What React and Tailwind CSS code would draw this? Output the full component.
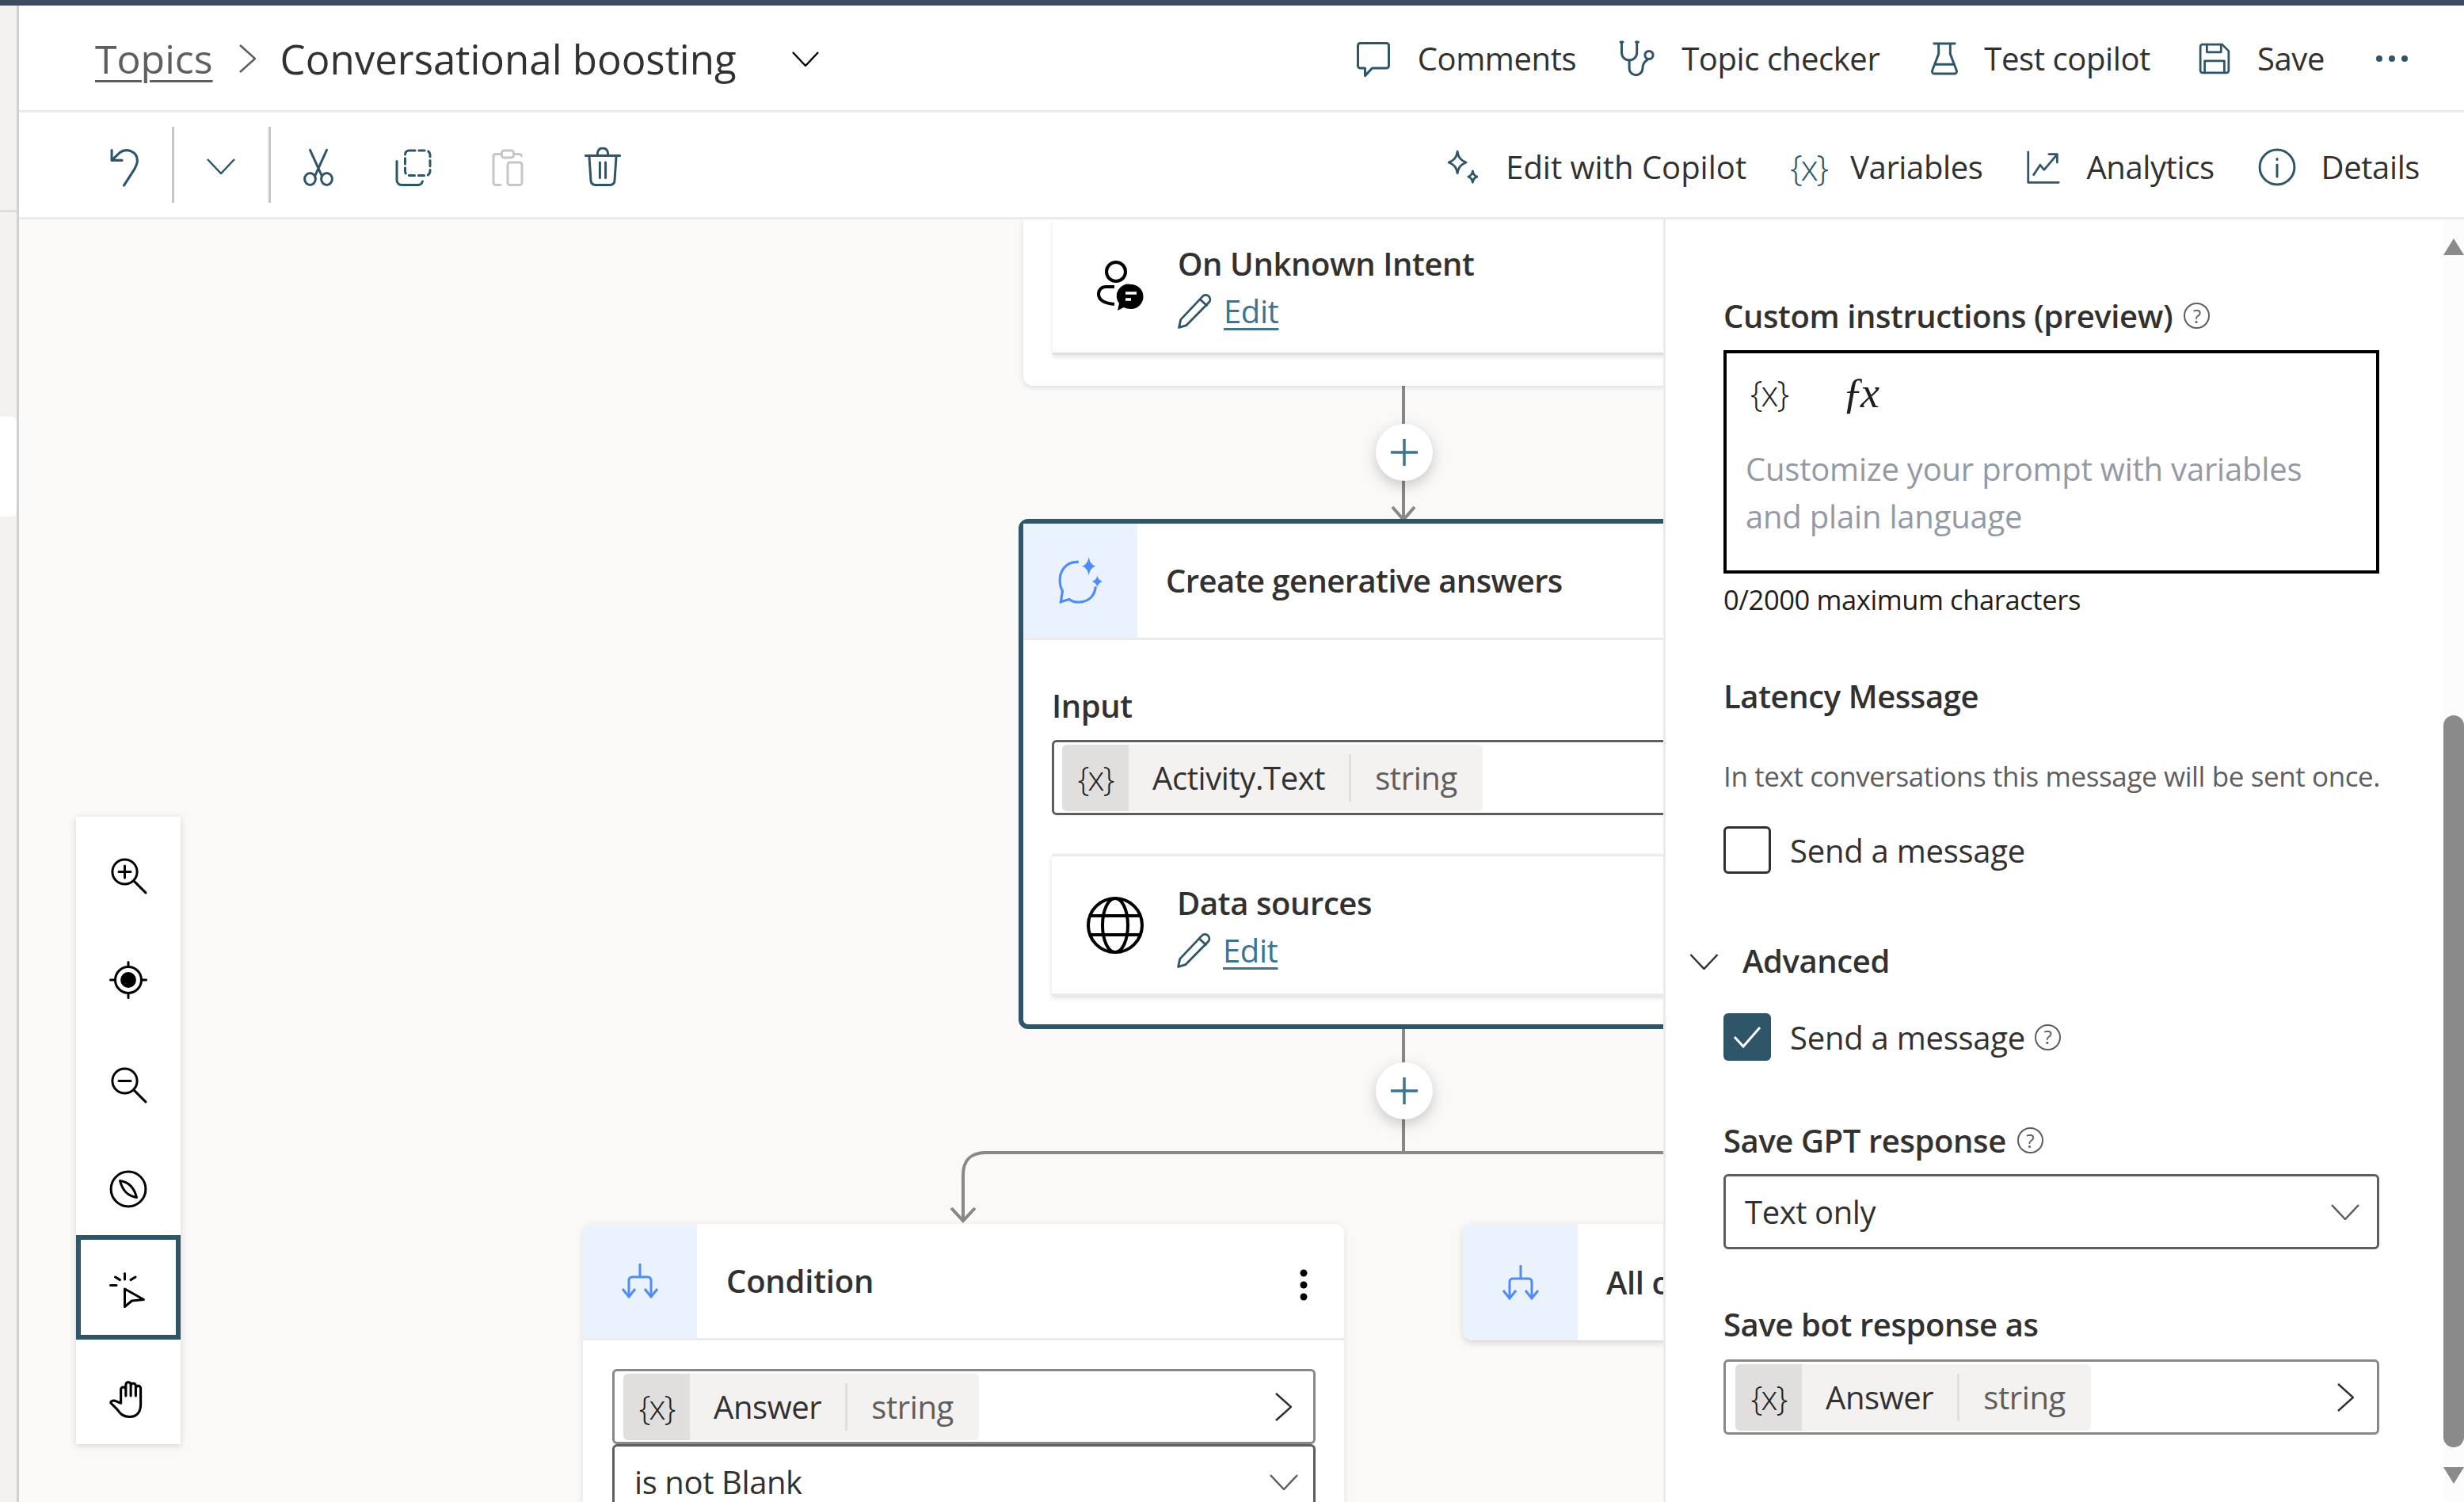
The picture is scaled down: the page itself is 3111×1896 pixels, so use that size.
const teal = '#2f5568'
const blue = '#4f8cf7'

// stroke icon on a 16 unit grid, 1 unit = 3px on screen
function Ico({ w = 48, h = 48, color = teal, sw = 1, vb = '0 0 16 16', children }) {
  return (
    <svg width={w} height={h} viewBox={vb} fill="none" stroke={color} strokeWidth={sw} strokeLinejoin="round" strokeLinecap="round" className="shrink-0">
      {children}
    </svg>
  )
}

const ChevronDown = ({ w = 36, h = 20, color = '#323130' }) => (
  <svg width={w} height={h} viewBox="0 0 36 20" fill="none" stroke={color} strokeWidth="2.5" className="shrink-0">
    <path d="M1 1l17 18L35 1" />
  </svg>
)

const ChevronRight = ({ w = 21, h = 36, color = '#323130' }) => (
  <svg width={w} height={h} viewBox="0 0 21 36" fill="none" stroke={color} strokeWidth="2.5" className="shrink-0">
    <path d="M1 1l19 17L1 35" />
  </svg>
)

const Help = () => (
  <span className="flex h-[33px] w-[33px] shrink-0 items-center justify-center rounded-full border-2 border-[#605e5c] text-[24px] font-normal leading-none text-[#605e5c]">?</span>
)

const Pencil = () => (
  <Ico w={44} h={44} vb="1 1 14 14" sw={0.9}>
    <path d="M1.500 14.500l.7-3.200L11 2a1.700 1.700 0 0 1 2.500 2.400l-9 9.200z" />
    <path d="M10 3.200l2.600 2.400" />
  </Ico>
)

function EditLink() {
  return (
    <div className="flex h-[44px] items-center gap-[14px]">
      <Pencil />
      <span className="text-[40px] leading-[44px] text-[#3e7391] underline decoration-[3px] underline-offset-[6px]">Edit</span>
    </div>
  )
}

function PlusButton({ className }) {
  return (
    <button type="button" className={`absolute flex h-[72px] w-[72px] items-center justify-center rounded-full bg-white shadow-[0_6px_18px_rgba(0,0,0,0.2)] ${className}`}>
      <svg width="34" height="34" viewBox="0 0 34 34" stroke="#3e7391" strokeWidth="3.5"><path d="M17 0v34M0 17h34" /></svg>
    </button>
  )
}

function VarChip({ name }) {
  return (
    <div className="flex h-[84px] items-center overflow-hidden rounded-[6px] bg-[#f3f2f1]">
      <div className="flex h-full w-[84px] items-center justify-center bg-[#e1dfdd] text-[42px] font-light tracking-[-2px] text-[#201f1e]">{'{x}'}</div>
      <span className="ml-[30px] text-[40px] text-[#323130]">{name}</span>
      <span className="ml-[30px] h-[60px] w-[3px] bg-[#e1dfdd]" />
      <span className="ml-[30px] mr-[32px] text-[40px] text-[#605e5c]">string</span>
    </div>
  )
}

const ConditionIcon = () => (
  <svg width="48" height="44" viewBox="0 0 48 44" fill="none" stroke={blue} strokeWidth="3" className="shrink-0">
    <path d="M24 0v16M10 42V21a4 4 0 0 1 4-4h20a4 4 0 0 1 4 4v21" />
    <path d="M2 32l8 10 8-10M30 32l8 10 8-10" />
  </svg>
)

const PersonChat = () => (
  <svg width="60" height="64" viewBox="0 0 60 64" fill="none" stroke="#000" strokeWidth="4" className="shrink-0">
    <circle cx="25" cy="14" r="12" />
    <path d="M23 33H12a9 9 0 0 0-9 9c0 8 8 12 20 13" />
    <path d="M44 30a15 15 0 0 1 0 31c-4 0-7-1-9-2l-8 4 2-9a15 15 0 0 1 15-24z" fill="#000" stroke="none" />
    <path d="M37 41h14M37 49h7" stroke="#fff" strokeWidth="3.500" />
  </svg>
)

const Globe = () => (
  <svg width="72" height="72" viewBox="0 0 72 72" fill="none" stroke="#000" strokeWidth="4" className="shrink-0">
    <circle cx="36" cy="36" r="34" />
    <ellipse cx="36" cy="36" rx="16" ry="34" />
    <path d="M4 24h64M4 48h64" />
  </svg>
)

function ToolButton({ active, children }) {
  return (
    <div className={`flex h-[132px] w-full items-center justify-center ${active ? 'border-[6px] border-[#2f5568] pt-[10px]' : 'pt-[16px]'}`}>
      {children}
    </div>
  )
}

const toolIcon = { w: 48, h: 48, color: '#000' }

function HeaderAction({ icon, label, className = '', labelClass = '' }) {
  return (
    <div className={`flex items-center gap-[32px] ${className}`}>
      {icon}
      <span className={`text-[40px] text-[#323130] ${labelClass}`}>{label}</span>
    </div>
  )
}

function Label({ children, className = '' }) {
  return <div className={`flex h-[60px] items-center gap-[14px] pb-[3px] text-[40px] font-semibold text-[#323130] ${className}`}>{children}</div>
}

export default function App() {
  return (
    <div className="flex h-[1896px] w-[3111px] flex-col overflow-hidden bg-white font-['Open_Sans',sans-serif] tracking-[-0.4px]">
      <div className="h-[7px] shrink-0 bg-[#3b4a60]" />
      <div className="flex min-h-0 flex-1">
        {/* app nav strip, mostly cut off */}
        <div className="flex w-[24px] shrink-0 flex-col border-r-[3px] border-[#d1d1d1] bg-[#f3f2f1]">
          <div className="h-[261px] shrink-0 border-b-[3px] border-[#e1dfdd]" />
          <div className="mt-[258px] h-[126px] shrink-0 rounded-r-[6px] bg-white" />
        </div>

        <div className="flex min-w-0 flex-1 flex-col">
          {/* title row */}
          <div className="flex h-[135px] shrink-0 items-center border-b-[3px] border-[#edebe9] pl-[96px] pr-[71px] pt-[2px]">
            <span className="text-[50px] tracking-normal text-[#605e5c] underline decoration-[3px] underline-offset-[8px]">Topics</span>
            <span className="ml-[33px]"><ChevronRight color="#605e5c" /></span>
            <span className="ml-[31px] text-[51px] tracking-normal text-[#323130]">Conversational boosting</span>
            <span className="ml-[70px]"><ChevronDown w={34} h={19} color="#000" /></span>
            <div className="ml-auto flex items-center">
              <HeaderAction
                label="Comments"
                icon={
                  <Ico w={48} h={48}>
                    <path d="M2.500 1.500h11a1 1 0 0 1 1 1v8.500a1 1 0 0 1-1 1H7.500l-3 3.200V12h-2a1 1 0 0 1-1-1V2.500a1 1 0 0 1 1-1z" />
                  </Ico>
                }
              />
              <HeaderAction
                className="ml-[53px]"
                label="Topic checker"
                icon={
                  <Ico w={48} h={48}>
                    <path d="M1 1h1M7.500 1h1M1.500 1v4.500a3.200 3.200 0 0 0 6.400 0V1" />
                    <path d="M4.700 8.700v3.300a2.800 2.800 0 0 0 5.600.200c.1-1.200.1-2.500 2.200-3.900" />
                    <circle cx="13" cy="6.500" r="1.700" />
                  </Ico>
                }
              />
              <HeaderAction
                className="ml-[64px]"
                label="Test copilot"
                icon={
                  <Ico w={36} h={44} vb="0 0 12 15">
                    <path d="M1.500 1h9M3.500 1v4.500L.8 12.500a1 1 0 0 0 1 1.500h8.400a1 1 0 0 0 1-1.500L8.500 5.500V1M2 10h8" />
                  </Ico>
                }
              />
              <HeaderAction
                className="ml-[59px]"
                label="Save"
                icon={
                  <Ico w={44} h={44}>
                    <path d="M2.500 1.500h9l3 3v9a1 1 0 0 1-1 1h-11a1 1 0 0 1-1-1v-11a1 1 0 0 1 1-1z" />
                    <path d="M4.500 1.500v3.500h6.500V1.500M3.500 14.500V9h9v5.500" />
                  </Ico>
                }
              />
              <svg width="40" height="8" viewBox="0 0 40 8" fill={teal} className="ml-[65px] shrink-0">
                <circle cx="4" cy="4" r="4" />
                <circle cx="20" cy="4" r="4" />
                <circle cx="36" cy="4" r="4" />
              </svg>
            </div>
          </div>

          {/* command bar */}
          <div className="flex h-[135px] shrink-0 items-center border-b-[3px] border-[#edebe9] pl-[114px] pr-[56px]">
            <span className="mt-[6px]">
              <Ico w={40} h={50} vb="0 0 13 16">
                <path d="M1 1v4.200h4.200M1 5.200L4.300 2c2.700-2 7.200-.5 7.200 3.300 0 1.400-.7 2.500-1.300 3.700L6 15.500" />
              </Ico>
            </span>
            <span className="ml-[39px] h-[96px] w-[3px] bg-[#c8c6c4]" />
            <span className="ml-[41px] mt-[4px]"><ChevronDown color={teal} /></span>
            <span className="ml-[42px] h-[96px] w-[3px] bg-[#c8c6c4]" />
            <span className="ml-[39px] mt-[6px]">
              <Ico w={42} h={48} vb="0 0 14 16">
                <path d="M3.500.800l5 11M10.500.800l-5 11" />
                <ellipse cx="3.500" cy="13" rx="2.300" ry="2.500" />
                <ellipse cx="10.500" cy="13" rx="2.300" ry="2.500" />
              </Ico>
            </span>
            <span className="ml-[75px] mt-[6px]">
              <Ico w={48} h={48}>
                <rect x="4.500" y="1" width="10.500" height="10.500" rx="1.800" strokeDasharray="2.400 1.600" />
                <path d="M1 5.500v8a2 2 0 0 0 2 2h7a2 2 0 0 0 1.800-1.500" />
              </Ico>
            </span>
            <span className="ml-[74px] mt-[6px]">
              <Ico w={42} h={48} color="#c8c6c4" vb="0 0 14 16">
                <path d="M4.500 2.500H2a1 1 0 0 0-1 1v11a1 1 0 0 0 1 1h2M9.500 2.500H12a1 1 0 0 1 .800.700" />
                <rect x="4.500" y="1" width="5" height="3" rx="1" />
                <rect x="7" y="6" width="6" height="9.500" rx="1" />
              </Ico>
            </span>
            <span className="ml-[75px] mt-[6px]">
              <Ico w={48} h={50}>
                <path d="M.800 3.200h14.400M5.800 3V2.200a2.200 2.200 0 0 1 4.400 0V3M2.300 3.200l.700 10.500a1.800 1.800 0 0 0 1.800 1.800h6.400a1.800 1.800 0 0 0 1.800-1.800l.700-10.500M6.800 6v6.500M9.200 6v6.500" />
              </Ico>
            </span>
            <div className="ml-auto mt-[6px] flex items-center gap-[55px]">
              <HeaderAction
                labelClass="tracking-normal"
                label="Edit with Copilot"
                icon={
                  <Ico w={44} h={44}>
                    <path d="M5.500 .800c.5 3 1.500 4 4 5-2.500 1-3.500 2-4 5-.5-3-1.500-4-4-5 2.500-1 3.500-2 4-5z" />
                    <path d="M12.500 9.800c.2 1.600.8 2.200 2 2.600-1.200.4-1.800 1-2 2.600-.2-1.600-.8-2.200-2-2.600 1.200-.4 1.800-1 2-2.600z" />
                  </Ico>
                }
              />
              <div className="flex items-center gap-[30px]">
                <span className="w-[46px] text-center text-[44px] font-light leading-[44px] tracking-[-2px] text-[#2f5568]">{'{x}'}</span>
                <span className="text-[40px] text-[#323130]">Variables</span>
              </div>
              <HeaderAction
                label="Analytics"
                icon={
                  <Ico w={44} h={46}>
                    <path d="M1 1v14h14" />
                    <path d="M3.500 11.500L6.500 7l1.800 2.200L14 2.500M10.500 2h3.800v3.800" />
                  </Ico>
                }
              />
              <HeaderAction
                label="Details"
                icon={
                  <Ico w={48} h={48}>
                    <circle cx="8" cy="8" r="7.300" />
                    <path d="M8 7v5M8 4.500v.3" />
                  </Ico>
                }
              />
            </div>
          </div>

          <div className="flex min-h-0 flex-1">
            {/* free canvas: nodes keep their diagram coordinates */}
            <div className="relative min-w-0 flex-1 overflow-hidden bg-[#faf9f8]">
              <svg className="absolute inset-0" width="2076" height="1619" fill="none" stroke="#8a8886" strokeWidth="4">
                <path d="M1748 210v168M1748 1022v156" />
                <path d="M1734 363l14 16 14-16" />
                <path d="M2076 1178H1220c-18 0-28 10-28 28v58" />
                <path d="M1177 1248l15 16 15-16" />
              </svg>

              {/* trigger card */}
              <div className="absolute left-[1268px] top-0 h-[210px] w-[900px] rounded-b-[12px] bg-white pl-[37px] shadow-[0_2px_6px_rgba(0,0,0,0.12)]">
                <div className="flex h-[171px] items-center border-b-[3px] border-[#e1dfdd] pl-[55px] shadow-[0_3px_6px_rgba(0,0,0,0.1)]">
                  <PersonChat />
                  <div className="ml-[43px] flex flex-col pb-[4px]">
                    <span className="mb-[8px] h-[60px] text-[40px] font-semibold leading-[60px] text-[#323130]">On Unknown Intent</span>
                    <EditLink />
                  </div>
                </div>
              </div>

              <PlusButton className="left-[1713px] top-[258px]" />

              {/* generative answers node */}
              <div className="absolute left-[1262px] top-[378px] h-[644px] w-[1000px] rounded-[12px] border-[6px] border-[#2f5568] bg-white">
                <div className="flex h-[147px] items-center border-b-[3px] border-[#edebe9]">
                  <div className="flex h-full w-[144px] items-center justify-center bg-[#eaf2fe]">
                    <svg width="60" height="60" viewBox="0 0 56 56" fill="none" stroke={blue} strokeWidth="3">
                      <path d="M26 6C10 5 3 18 4 30c0 5 2 8 3 10l-2 13 10-3c4 3 8 4 14 3 10-1 16-8 17-18" />
                      <path d="M38 0c1 6 3 9 8 11-5 2-7 5-8 11-1-6-3-9-8-11 5-2 7-5 8-11zM48 22c1 4 2 5 6 7-4 2-5 3-6 7-1-4-2-5-6-7 4-2 5-3 6-7z" fill={blue} stroke="none" />
                    </svg>
                  </div>
                  <span className="ml-[36px] text-[40px] font-semibold tracking-[-0.55px] text-[#323130]">Create generative answers</span>
                </div>
                <div className="pl-[36px]">
                  <div className="mt-[53px] h-[60px] text-[40px] font-semibold leading-[60px] text-[#323130]">Input</div>
                  <div className="mt-[13px] flex h-[95px] items-center rounded-l-[6px] border-[3px] border-[#605e5c] pl-[10px]">
                    <VarChip name="Activity.Text" />
                  </div>
                  <div className="mt-[49px] flex h-[179px] items-center border-y-[3px] border-[#edebe9] pl-[44px] shadow-[0_3px_6px_rgba(0,0,0,0.12)]">
                    <Globe />
                    <div className="ml-[42px] flex flex-col pb-[4px]">
                      <span className="mb-[8px] h-[60px] text-[40px] font-semibold leading-[60px] text-[#323130]">Data sources</span>
                      <EditLink />
                    </div>
                  </div>
                </div>
              </div>

              <PlusButton className="left-[1713px] top-[1064px]" />

              {/* branch 1 */}
              <div className="absolute left-[712px] top-[1268px] h-[500px] w-[961px] rounded-t-[12px] bg-white shadow-[0_2px_8px_rgba(0,0,0,0.1)]">
                <div className="flex h-[147px] items-center border-b-[3px] border-[#edebe9]">
                  <div className="flex h-full w-[144px] items-center justify-center rounded-tl-[12px] bg-[#eaf2fe]">
                    <ConditionIcon />
                  </div>
                  <span className="ml-[37px] flex-1 text-[40px] font-semibold tracking-[-0.2px] text-[#323130]">Condition</span>
                  <svg width="10" height="40" viewBox="0 0 10 40" fill="#000" className="mr-[46px] mt-[10px]">
                    <circle cx="5" cy="5" r="4.500" />
                    <circle cx="5" cy="20" r="4.500" />
                    <circle cx="5" cy="35" r="4.500" />
                  </svg>
                </div>
                <div className="pl-[37px] pr-[36px] pt-[36px]">
                  <div className="flex h-[95px] items-center justify-between rounded-[6px] border-[3px] border-[#8a8886] pl-[11px] pr-[27px]">
                    <VarChip name="Answer" />
                    <ChevronRight />
                  </div>
                  <div className="flex h-[95px] items-center justify-between rounded-[6px] border-[3px] border-[#605e5c] pl-[25px] pr-[19px]">
                    <span className="text-[40px] text-[#323130]">is not Blank</span>
                    <ChevronDown color="#605e5c" />
                  </div>
                </div>
              </div>

              {/* branch 2 */}
              <div className="absolute left-[1823px] top-[1268px] flex h-[147px] w-[400px] items-center rounded-[12px] bg-white shadow-[0_3px_8px_rgba(0,0,0,0.15)]">
                <div className="flex h-full w-[145px] shrink-0 items-center justify-center rounded-l-[12px] bg-[#eaf2fe]">
                  <ConditionIcon />
                </div>
                <span className="ml-[36px] whitespace-nowrap text-[40px] font-semibold text-[#323130]">All other conditions</span>
              </div>

              {/* zoom tools */}
              <div className="absolute left-[72px] top-[754px] flex w-[132px] flex-col bg-white shadow-[0_2px_8px_rgba(0,0,0,0.15)]">
                <ToolButton>
                  <Ico {...toolIcon}>
                    <circle cx="6.500" cy="6.500" r="5.200" />
                    <path d="M4 6.500h5M6.500 4v5M10.300 10.300l5 5" />
                  </Ico>
                </ToolButton>
                <ToolButton>
                  <Ico {...toolIcon}>
                    <circle cx="8" cy="8" r="5.500" />
                    <circle cx="8" cy="8" r="2.800" fill="#000" />
                    <path d="M8 .500v2M8 13.500v2M.500 8h2M13.500 8h2" />
                  </Ico>
                </ToolButton>
                <ToolButton>
                  <Ico {...toolIcon}>
                    <circle cx="6.500" cy="6.500" r="5.200" />
                    <path d="M4 6.500h5M10.300 10.300l5 5" />
                  </Ico>
                </ToolButton>
                <ToolButton>
                  <Ico {...toolIcon}>
                    <circle cx="8" cy="8" r="7.300" />
                    <path d="M4.500 4.500C8 5 10.500 7.500 11.500 11.500 8 11 5.500 8.500 4.500 4.500z" />
                  </Ico>
                </ToolButton>
                <ToolButton active>
                  <Ico {...toolIcon}>
                    <path d="M6.500 7v7.500l3-2.500 5-.500zM.500 5.500h2.500M2.500 2l2 1.200M6.500.500V3M11 2l-2 1.200" />
                  </Ico>
                </ToolButton>
                <ToolButton>
                  <Ico w={50} h={50} color="#000">
                    <path d="M5 10V4.500a1 1 0 0 1 2 0V7M7 7V2.500a1 1 0 0 1 2 0V7M9 7V3a1 1 0 0 1 2 0V7M11 7V4a1 1 0 0 1 2 0v6.500c0 3-1.500 5-4.500 5-2.500 0-3.500-1-5-3L1 10c-.3-.5.500-1.200 1.500-1L5 10" />
                  </Ico>
                </ToolButton>
              </div>
            </div>

            {/* properties panel */}
            <div className="flex w-[1011px] shrink-0 border-l-[3px] border-[#edebe9] bg-white">
              <div className="w-[982px] pl-[73px] pr-[81px] pt-[93px]">
                <Label>
                  Custom instructions (preview) <Help />
                </Label>
                <div className="mt-[12px] h-[282px] border-[4px] border-black pl-[24px] pt-[20px]">
                  <div className="flex h-[60px] items-center text-[#201f1e]">
                    <span className="ml-[6px] w-[116px] text-[44px] font-light leading-none tracking-[-2px]">{'{x}'}</span>
                    <span className="font-['Liberation_Serif',serif] text-[54px] italic leading-none tracking-[-4px]">ƒx</span>
                  </div>
                  <p className="mt-[36px] text-[40px] leading-[60px] tracking-[-0.2px] text-[#9499a6]">
                    Customize your prompt with variables
                    <br />
                    and plain language
                  </p>
                </div>
                <div className="mt-[8px] h-[50px] text-[34.5px] leading-[50px] text-[#201f1e]">0/2000 maximum characters</div>
                <Label className="mt-[68px]">Latency Message</Label>
                <div className="mt-[40px] h-[60px] whitespace-nowrap text-[35px] leading-[60px] text-[#605e5c]">In text conversations this message will be sent once.</div>
                <div className="mt-[33px] flex h-[60px] items-center gap-[24px]">
                  <span className="h-[60px] w-[60px] rounded-[6px] border-[3px] border-[#323130]" />
                  <span className="pt-[2px] text-[40px] tracking-[-0.25px] text-[#323130]">Send a message</span>
                </div>
                <div className="-ml-[43px] mt-[81px] flex h-[60px] items-center">
                  <ChevronDown w={37} h={20} />
                  <span className="ml-[30px] pb-[2px] text-[40px] font-semibold text-[#323130]">Advanced</span>
                </div>
                <div className="mt-[35px] flex h-[60px] items-center gap-[24px]">
                  <span className="flex h-[60px] w-[60px] items-center justify-center rounded-[6px] bg-[#2f5568]">
                    <svg width="36" height="28" viewBox="0 0 36 28" fill="none" stroke="#fff" strokeWidth="3"><path d="M2 14l11 12L34 2" /></svg>
                  </span>
                  <span className="pt-[2px] text-[40px] tracking-[-0.25px] text-[#323130]">Send a message</span>
                  <span className="-ml-[12px]"><Help /></span>
                </div>
                <Label className="mt-[72px]">
                  Save GPT response <Help />
                </Label>
                <div className="mt-[11px] flex h-[95px] items-center justify-between rounded-[6px] border-[3px] border-[#605e5c] pl-[24px] pr-[22px]">
                  <span className="text-[40px] text-[#323130]">Text only</span>
                  <ChevronDown color="#605e5c" />
                </div>
                <Label className="mt-[66px]">Save bot response as</Label>
                <div className="mt-[13px] flex h-[95px] items-center justify-between rounded-[6px] border-[3px] border-[#8a8886] pl-[12px] pr-[29px]">
                  <VarChip name="Answer" />
                  <ChevronRight />
                </div>
              </div>
              {/* scrollbar */}
              <div className="flex w-[26px] shrink-0 flex-col bg-[#fcfcfc] pt-[24px]">
                <svg width="26" height="21" viewBox="0 0 26 21" fill="#8a8a8a"><path d="M13 0l13 21H0z" /></svg>
                <div className="mt-[581px] h-[924px] rounded-[13px] bg-[#8a8a8a]" />
                <svg width="26" height="21" viewBox="0 0 26 21" fill="#8a8a8a" className="mt-[25px]"><path d="M13 21L26 0H0z" /></svg>
              </div>
            </div>
          </div>
        </div>
      </div>
    </div>
  )
}
